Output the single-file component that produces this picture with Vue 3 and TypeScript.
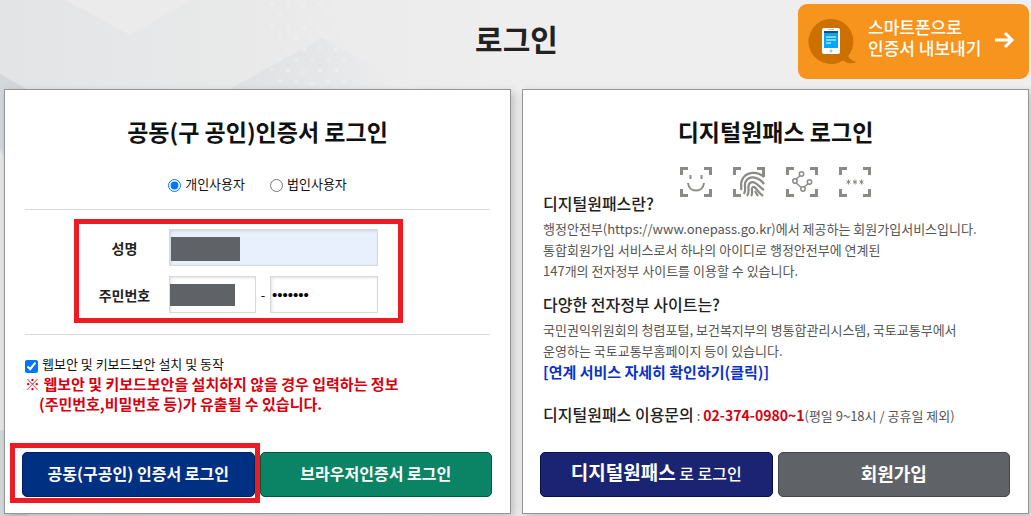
<script setup lang="ts">
import { ref } from 'vue'

const userType = ref<'personal' | 'corporate'>('personal')
const userTypes = [
  { value: 'personal', label: '개인사용자' },
  { value: 'corporate', label: '법인사용자' },
]
const secretNumber = ref('1234567')
const security = ref(true)
const dots: [number, number, number][] = []
for (let row = 0; row < 8; row++) {
  for (let col = 0; col < 8; col++) {
    dots.push([272 + col * 16 + (row % 2) * 8, 4 + row * 11 + (col % 3), 2 - (col > 4 ? 1 : 0)])
  }
}
</script>

<template>
  <div class="page">
    <svg class="backdrop" viewBox="0 0 1031 516" preserveAspectRatio="xMinYMin slice" aria-hidden="true">
      <defs>
        <linearGradient id="base" x1="0" y1="0" x2="1" y2="0">
          <stop offset="0" stop-color="#e3e4e6" />
          <stop offset="0.3" stop-color="#ebebec" />
          <stop offset="0.5" stop-color="#eeeeee" />
          <stop offset="1" stop-color="#eeeeee" />
        </linearGradient>
        <linearGradient id="peak" x1="0" y1="0" x2="1" y2="0">
          <stop offset="0" stop-color="#dfe0e3" />
          <stop offset="0.5" stop-color="#e6e7e9" />
          <stop offset="1" stop-color="#eeeeee" />
        </linearGradient>
        <linearGradient id="slope" x1="0" y1="0" x2="1" y2="0">
          <stop offset="0" stop-color="#e6e7e8" />
          <stop offset="1" stop-color="#ebebeb" />
        </linearGradient>
      </defs>
      <rect width="1031" height="516" fill="url(#base)" />
      <path d="M65 0L130 35L192 0Z" fill="#ebebeb" />
      <path d="M130 35L192 0H330L320 40L228 90H130Z" fill="url(#slope)" />
      <path d="M228 90L322 38L420 90Z" fill="url(#peak)" />
      <path d="M0 74L28 90V516H0Z" fill="#d4d7da" />
      <path d="M0 150L28 190V430H0Z" fill="#e4e5e7" />
      <circle v-for="([x, y, r], i) in dots" :key="i" :cx="x" :cy="y" :r="r" fill="#f2f2f2" opacity="0.5" />
    </svg>

    <header class="header">
      <h1>로그인</h1>
      <a class="export" href="#export">
        <svg width="50" height="46" viewBox="0 0 50 46" aria-hidden="true">
          <path d="M23 0a22.500 22.500 0 1 0 12 41.500Q41 46 49 43Q43 42 40 37A22.500 22.500 0 0 0 23 0Z" fill="#cc7000" />
          <rect x="14" y="9" width="18" height="26" rx="2" fill="#fff" />
          <rect x="16" y="12" width="14" height="17" fill="#00a8ff" />
          <rect x="16" y="12" width="14" height="2" fill="#264a73" />
          <path d="M18 18H28M18 21H28M18 24H23" stroke="#fff" />
          <path d="M20 10.500H26" stroke="#c8c8c8" />
          <circle cx="23" cy="32" r="1.500" fill="#b7bdc4" />
        </svg>
        <span class="caption"><span>스마트폰으로</span><span>인증서 내보내기</span></span>
        <svg class="arrow" width="20" height="18" viewBox="0 0 20 18" aria-hidden="true">
          <path d="M0 9H17M10 2L17 9L10 16" fill="none" stroke="#fff" stroke-width="3" />
        </svg>
      </a>
    </header>

    <main class="panels">
      <section class="panel cert">
        <h2>공동(구 공인)인증서 로그인</h2>
        <div class="types">
          <label v-for="t in userTypes" :key="t.value">
            <input v-model="userType" type="radio" name="userType" :value="t.value" />{{ t.label }}
          </label>
        </div>
        <div class="fields">
          <div class="marked">
            <div class="row">
              <label for="name">성명</label>
              <div class="control wide">
                <input id="name" type="text" class="filled" />
                <span class="mask"></span>
              </div>
            </div>
            <div class="row">
              <label for="reg1">주민번호</label>
              <div class="control front">
                <input id="reg1" type="text" />
                <span class="mask small"></span>
              </div>
              <span class="dash">-</span>
              <div class="control back">
                <input v-model="secretNumber" type="password" aria-label="주민번호 뒷자리" />
              </div>
            </div>
          </div>
        </div>
        <label class="check"><input v-model="security" type="checkbox" />웹보안 및 키보드보안 설치 및 동작</label>
        <p class="warning">※ 웹보안 및 키보드보안을 설치하지 않을 경우 입력하는 정보<br /><span>(주민번호,비밀번호 등)가 유출될 수 있습니다.</span></p>
        <div class="buttons">
          <div class="focus"><button type="button" class="blue">공동(구공인) 인증서 로그인</button></div>
          <button type="button" class="green">브라우저인증서 로그인</button>
        </div>
      </section>

      <section class="panel onepass">
        <h2>디지털원패스 로그인</h2>
        <div class="icons" aria-hidden="true">
          <svg width="32" height="30" viewBox="0 0 32 30">
            <path class="corner" d="M1.500 8V1.500H8M24 1.500H30.500V8M1.500 22V28.500H8M24 28.500H30.500V22" />
            <path d="M10.500 8V12M21.500 8V12M8 16C9 26 23 26 24 16" />
          </svg>
          <svg width="32" height="30" viewBox="0 0 32 30">
            <path class="corner" d="M1.500 8V1.500H8M24 1.500H30.500V10M1.500 22V28.500H8" />
            <path class="ridge" d="M8 23C9 20 7 17 9 13C13 4 25 4 31 10M11 27C14 21 10 18 13 14C17 8 26 10 31 17M14 29C18 24 13 19 17 16C22 13 25 19 31 23M18 29C21 26 17 21 20 20C23 19 24 25 30 29M22 24L25 29" />
          </svg>
          <svg width="32" height="30" viewBox="0 0 32 30">
            <path class="corner" d="M1.500 8V1.500H8M24 1.500H30.500V8M1.500 22V28.500H8M24 28.500H30.500V22" />
            <path class="thin" d="M14 9L10 12M10 16L15 20M18 20L22 17" />
            <circle class="thin" cx="15.500" cy="7" r="2.200" /><circle class="thin" cx="9" cy="14" r="2.200" />
            <circle class="thin" cx="17" cy="22" r="2.200" /><circle class="thin" cx="23.500" cy="15" r="2.200" />
          </svg>
          <svg width="32" height="30" viewBox="0 0 32 30">
            <path class="corner" d="M1.500 8V1.500H8M24 1.500H30.500V8M1.500 22V28.500H8M24 28.500H30.500V22" />
            <path class="star" d="M9.500 12.500V17.500M7.500 13.700L11.500 16.300M11.500 13.700L7.500 16.300M16 12.500V17.500M14 13.700L18 16.300M18 13.700L14 16.300M22.500 12.500V17.500M20.500 13.700L24.500 16.300M24.500 13.700L20.500 16.300" />
          </svg>
        </div>
        <div class="info">
          <h3>디지털원패스란?</h3>
          <p>행정안전부(https://www.onepass.go.kr)에서 제공하는 회원가입서비스입니다.<br />통합회원가입 서비스로서 하나의 아이디로 행정안전부에 연계된<br />147개의 전자정부 사이트를 이용할 수 있습니다.</p>
          <h3>다양한 전자정부 사이트는?</h3>
          <p>국민권익위원회의 청렴포털, 보건복지부의 병통합관리시스템, 국토교통부에서<br />운영하는 국토교통부홈페이지 등이 있습니다.</p>
          <a href="#services">[연계 서비스 자세히 확인하기(클릭)]</a>
          <p class="contact"><strong>디지털원패스 이용문의</strong> : <b>02-374-0980~1</b>(평일 9~18시 / 공휴일 제외)</p>
        </div>
        <div class="buttons">
          <button type="button" class="navy"><strong>디지털원패스</strong> 로 로그인</button>
          <button type="button" class="gray">회원가입</button>
        </div>
      </section>
    </main>
  </div>
</template>

<style>
body {
  margin: 0;
  background: #eee;
}
</style>

<style scoped>
.page {
  position: relative;
  display: flex;
  flex-direction: column;
  min-height: 100vh;
  box-sizing: border-box;
  overflow: hidden;
  font-family: "Noto Sans CJK KR", sans-serif;
  font-size: 13px;
  color: #111;
}
.page * { box-sizing: border-box; }
.backdrop {
  position: absolute;
  inset: 0;
  width: 100%;
  height: 100%;
}
.header {
  position: relative;
  display: grid;
  grid-template-columns: 1fr auto 1fr;
  padding: 4px 2px 0 4px;
  height: 89px;
}
h1 {
  grid-column: 2;
  margin: 12px 0 0;
  font-size: 30px;
  line-height: 44px;
  font-weight: 700;
  color: #222;
}
.export {
  justify-self: end;
  display: flex;
  align-items: center;
  width: 231px;
  height: 75px;
  padding: 0 14px 0 10px;
  border-radius: 9px;
  background: #f7941e;
  color: #fff;
  font-size: 17px;
  line-height: 21px;
  font-weight: 500;
  text-decoration: none;
  white-space: nowrap;
}
.caption { margin: 0 auto 10px 10px; }
.caption span { display: block; }
.arrow { margin-bottom: 4px; }
.panels {
  position: relative;
  display: grid;
  grid-template-columns: 1fr 1fr;
  gap: 11px;
  padding: 0 2px 2px 4px;
  flex: 1;
}
.panel {
  display: flex;
  flex-direction: column;
  border: 1px solid #949596;
  background: #fff;
  box-shadow: 3px 3px 8px rgba(0, 0, 0, 0.2);
}
h2 {
  margin: 23px 0 0;
  text-align: center;
  font-size: 23px;
  line-height: 36px;
  font-weight: 700;
}
.types {
  display: flex;
  justify-content: center;
  gap: 25px;
  margin: 24px 0 0;
  height: 21px;
}
.types label, .check {
  display: flex;
  align-items: center;
  line-height: 20px;
}
.types input, .check input {
  width: 13px;
  height: 13px;
  margin: 4px 4px 0 0;
}
.fields {
  margin: 15px 20px 0;
  padding: 9px 87px 11px 49px;
  border: solid #dcdcdc;
  border-width: 1px 0;
}
.marked {
  display: grid;
  gap: 10px;
  padding: 5px 20px 5px 15px;
  border: 5px solid #ed1c24;
}
.row {
  display: flex;
  align-items: center;
}
.row label {
  width: 61px;
  margin-right: 14px;
  text-align: center;
  font-size: 14px;
  font-weight: 700;
  color: #222;
}
.control {
  position: relative;
  height: 37px;
}
.wide { flex: 1; }
.front { width: 87px; }
.back { flex: 1; }
.control input {
  width: 100%;
  height: 100%;
  padding: 0 1px;
  border: 1px solid #d9d9d9;
  background: #fff;
  box-shadow: inset 1px 1px 3px rgba(0, 0, 0, 0.12);
  font-size: 15px;
  color: #000;
}
.control .filled { background: #e8f0fe; }
.mask {
  position: absolute;
  left: 2px;
  top: 8px;
  width: 69px;
  height: 24px;
  background: #5f6368;
}
.mask.small {
  left: 1px;
  width: 65px;
  height: 22px;
}
.dash { width: 14px; text-align: center; }
.check { margin: 19px 20px 0; }
.warning {
  margin: 0 20px;
  font-size: 15px;
  line-height: 20px;
  font-weight: 700;
  color: #d7000f;
  white-space: nowrap;
}
.warning span { margin-left: 14px; }
.buttons {
  display: grid;
  grid-template-columns: 1fr 1fr;
  gap: 5px;
  margin: auto 18px 16px 17px;
}
button {
  width: 100%;
  height: 45px;
  padding: 0 0 4px;
  border: 1px solid;
  border-radius: 5px;
  color: #fff;
  font-family: inherit;
  font-size: 16px;
  line-height: 24px;
  font-weight: 700;
  white-space: nowrap;
}
.blue { background: #003082; border-color: #00205f; }
.green { background: #0a8464; border-color: #07573f; }
.navy { background: #1b2472; border-color: #050f4c; font-weight: 500; }
.gray { background: #5f6368; border-color: #444649; font-size: 18px; }
.navy strong { font-size: 19px; font-weight: 700; }
.focus { position: relative; }
.focus::after {
  content: "";
  position: absolute;
  inset: -9px -5px -6px -12px;
  border: 5px solid #ed1c24;
  pointer-events: none;
}
.icons {
  display: flex;
  justify-content: center;
  gap: 21px;
  margin: 18px 0 0;
}
.icons svg {
  fill: none;
  stroke: #8b8a86;
  stroke-width: 2;
}
.icons .corner { stroke-width: 3; }
.icons .ridge { stroke-width: 2.200; }
.icons .thin { stroke-width: 1.500; }
.icons .star { stroke-width: 1; }
.info {
  margin: -6px 20px 0;
  color: #555;
  white-space: nowrap;
}
h3 {
  margin: 0;
  font-size: 16px;
  line-height: 24px;
  font-weight: 500;
  color: #222;
}
.info p {
  margin: 3px 0 11px;
  line-height: 21px;
}
.info p + a {
  display: block;
  margin-top: -11px;
  font-size: 15px;
  line-height: 21px;
  font-weight: 700;
  color: #0a32c8;
  text-decoration: none;
}
.info .contact { margin: 22px 0 0; }
.contact strong { font-size: 16px; font-weight: 500; color: #222; }
.contact b { font-size: 14px; color: #d7000f; }
</style>
